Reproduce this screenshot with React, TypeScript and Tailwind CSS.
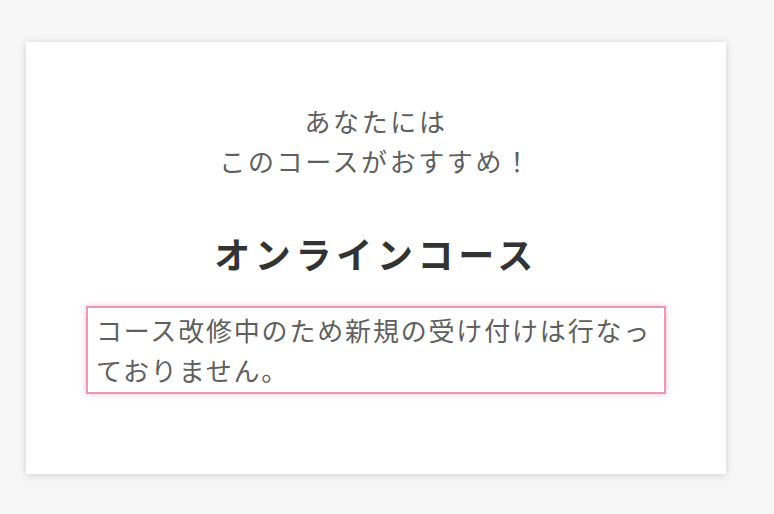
export default function App() {
  return (
    <div
      className="min-h-[514px] w-full bg-[#f7f7f7] pt-[42px] pl-[26px]"
      style={{ fontFamily: '"Noto Sans CJK JP", "Noto Sans", sans-serif' }}
    >
      {/* Card */}
      <div className="w-[700px] bg-white px-[60px] pt-[59px] pb-[80px] shadow-[0_1px_8px_rgba(0,0,0,0.16)]">
        <p className="text-center text-[26px] leading-[40px] tracking-[0.1em] text-[#5f5f5f]">
          あなたには
          <br />
          このコースがおすすめ！
        </p>

        <h2 className="mt-[48px] text-center text-[36px] font-bold leading-[48px] tracking-[0.13em] text-[#333]">
          オンラインコース
        </h2>

        <div className="mt-[29px] border-2 border-[#eb9ab3] px-[8px] py-[2px] shadow-[0_0_6px_rgba(235,154,179,0.6)]">
          <p className="text-[26px] leading-[40px] tracking-[0.07em] text-[#5f5f5f]">
            コース改修中のため新規の受け付けは行なっておりません。
          </p>
        </div>
      </div>
    </div>
  );
}
